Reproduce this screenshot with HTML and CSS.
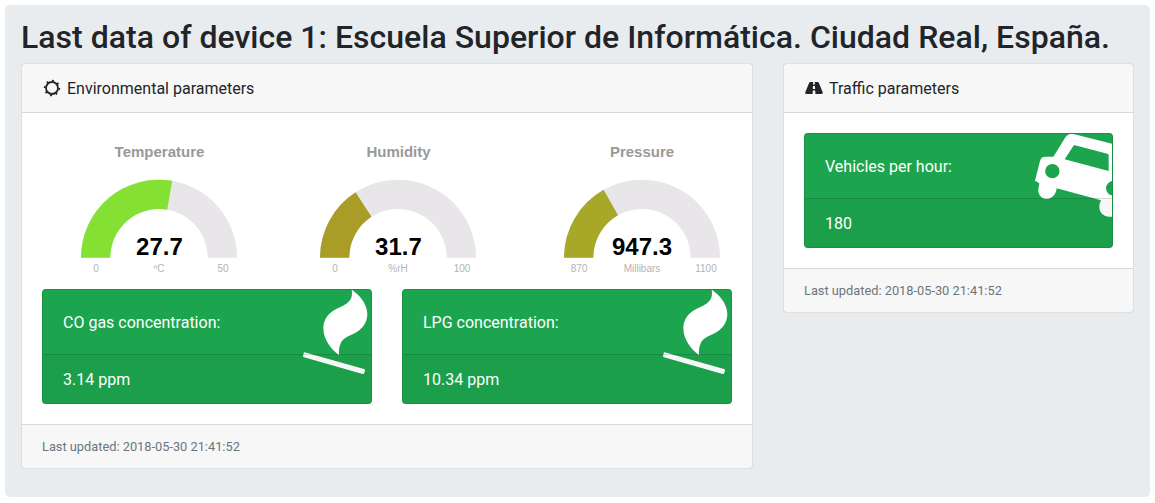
FILE: index.html
```html
<!DOCTYPE html>
<html lang="en">
<head>
<meta charset="utf-8">
<title>Last data of device 1</title>
<link rel="stylesheet" href="styles.css">
</head>
<body>
<main class="panel">
  <h2 class="title">Last data of device 1: Escuela Superior de Informática. Ciudad Real, España.</h2>
  <div class="columns">
    <section class="card">
      <header class="card-header">
        <svg class="head-icon" viewBox="0 0 20 20" aria-hidden="true">
          <circle class="sun-ring" cx="10" cy="10" r="6"/>
          <circle class="sun-teeth" cx="10" cy="10" r="7.4" pathLength="48"/>
        </svg>
        <span>Environmental parameters</span>
      </header>
      <div class="card-body">
        <div class="gauges">
          <svg class="gauge" viewBox="0 0 180 146">
            <text class="g-title" x="90.5" y="24">Temperature</text>
            <path class="g-bg" d="M12 124.7A78 78 0 0 1 168 124.7L138.7 124.7A48.7 48.7 0 0 0 41.3 124.7Z"/>
            <path class="g-temp" d="M12 124.7A78 78 0 0 1 103.17 47.81L98.22 76.7A48.7 48.7 0 0 0 41.3 124.7Z"/>
            <text class="g-value" x="90.4" y="122">27.7</text>
            <text class="g-label" x="27" y="139">0</text>
            <text class="g-label" x="90" y="139">ºC</text>
            <text class="g-label" x="154" y="139">50</text>
          </svg>
          <svg class="gauge" viewBox="0 0 180 146">
            <text class="g-title" x="90.5" y="24">Humidity</text>
            <path class="g-bg" d="M12 124.7A78 78 0 0 1 168 124.7L138.7 124.7A48.7 48.7 0 0 0 41.3 124.7Z"/>
            <path class="g-hum" d="M12 124.7A78 78 0 0 1 47.58 59.25L63.51 83.84A48.7 48.7 0 0 0 41.3 124.7Z"/>
            <text class="g-value" x="90.4" y="122">31.7</text>
            <text class="g-label" x="27" y="139">0</text>
            <text class="g-label" x="90" y="139">%rH</text>
            <text class="g-label" x="154" y="139">100</text>
          </svg>
          <svg class="gauge" viewBox="0 0 180 146">
            <text class="g-title" x="90" y="24">Pressure</text>
            <path class="g-bg" d="M12 124.7A78 78 0 0 1 168 124.7L138.7 124.7A48.7 48.7 0 0 0 41.3 124.7Z"/>
            <path class="g-pres" d="M12 124.7A78 78 0 0 1 51.6 56.81L66.02 82.31A48.7 48.7 0 0 0 41.3 124.7Z"/>
            <text class="g-value" x="90" y="122">947.3</text>
            <text class="g-label" x="27" y="139">870</text>
            <text class="g-label" x="90" y="139">Millibars</text>
            <text class="g-label" x="154" y="139">1100</text>
          </svg>
        </div>
        <div class="boxes">
          <article class="stat">
            <svg class="stat-icon flame" viewBox="0 0 360 390" aria-hidden="true">
              <path class="ic-white" d="M185 29C205 42 232 70 232 102C232 130 215 150 190 162C165 172 145 180 147 226C125 208 100 180 100 145C100 115 118 98 140 86C165 76 192 65 185 29Z"/>
              <polygon class="ic-match" points="45,221 221,271 219,278 43,228"/>
            </svg>
            <div class="stat-top">CO gas concentration:</div>
            <div class="stat-bottom">3.14 ppm</div>
          </article>
          <article class="stat">
            <svg class="stat-icon flame" viewBox="0 0 360 390" aria-hidden="true">
              <path class="ic-white" d="M185 29C205 42 232 70 232 102C232 130 215 150 190 162C165 172 145 180 147 226C125 208 100 180 100 145C100 115 118 98 140 86C165 76 192 65 185 29Z"/>
              <polygon class="ic-match" points="45,221 221,271 219,278 43,228"/>
            </svg>
            <div class="stat-top">LPG concentration:</div>
            <div class="stat-bottom">10.34 ppm</div>
          </article>
        </div>
      </div>
      <footer class="card-footer">Last updated: 2018-05-30 21:41:52</footer>
    </section>
    <section class="card">
      <header class="card-header">
        <svg class="head-icon" viewBox="0 0 20 20" aria-hidden="true">
          <path class="road" d="M6.2 4H9.2L9 6.4H10.9L10.8 4H13.8C14.3 4 14.6 4.2 14.8 4.7L18.7 14.3C19 15.2 18.5 16 17.6 16H11.4L11.2 12.6H8.8L8.6 16H2.4C1.5 16 1 15.2 1.3 14.3L5.2 4.7C5.4 4.2 5.7 4 6.2 4ZM8.9 8L8.9 11H11.1L11 8Z"/>
        </svg>
        <span>Traffic parameters</span>
      </header>
      <div class="card-body">
        <article class="stat">
          <svg class="stat-icon car" viewBox="0 0 360 390" aria-hidden="true">
            <path class="ic-white" fill-rule="evenodd" d="M133 42C138 31 148 25 160 27L290 60V275H265C250 274 238 262 238 246C238 238 240 232 243 226L110 190C108 208 97 222 80 222C64 222 54 209 55 194L58 175L45 167L60 108C62 99 68 95 76 95H100ZM162 60L134 103L266 138V92C266 89 265 87 262 86ZM97 117A21 21 0 1 0 97 160A21 21 0 1 0 97 117ZM280 168A22 22 0 1 0 280 212A22 22 0 1 0 280 168Z"/>
          </svg>
          <div class="stat-top">Vehicles per hour:</div>
          <div class="stat-bottom">180</div>
        </article>
      </div>
      <footer class="card-footer">Last updated: 2018-05-30 21:41:52</footer>
    </section>
  </div>
</main>
</body>
</html>
```
FILE: styles.css
```css
* { box-sizing: border-box; }
body {
  margin: 0;
  padding: 5px 5px 6px;
  background: #fff;
  color: #212529;
  font-family: Roboto, "Liberation Sans", sans-serif;
  font-size: 16px;
  line-height: 1.5;
}
.panel {
  background: #e9ecef;
  border-radius: 4.8px;
  padding: 13px 16px 12px;
}
.title {
  margin: 0 0 6.6px;
  font-size: 32px;
  font-weight: 500;
  line-height: 1.2;
  letter-spacing: .02px;
}
.columns {
  display: grid;
  grid-template-columns: 732px 351px;
  column-gap: 30px;
  align-items: start;
  margin-bottom: 16px;
}
.card {
  background: #fff;
  border: 1px solid rgba(0, 0, 0, .125);
  border-radius: 4px;
}
.card-header {
  display: flex;
  align-items: center;
  gap: 5px;
  padding: 13px 20px 11px;
  background: rgba(0, 0, 0, .03);
  border-bottom: 1px solid rgba(0, 0, 0, .125);
}
.head-icon {
  width: 20px;
  height: 20px;
  flex: none;
  margin-top: -2px;
}
.sun-ring {
  fill: none;
  stroke: #212529;
  stroke-width: 1.8;
}
.sun-teeth {
  fill: none;
  stroke: #212529;
  stroke-width: 1.6;
  stroke-dasharray: 2 4;
}
.road { fill: #212529; }
.card-body { padding: 20px; }
.card-footer {
  padding: 12px 20px;
  background: rgba(0, 0, 0, .03);
  border-top: 1px solid rgba(0, 0, 0, .125);
  color: #6c757d;
  font-size: 12.8px;
}
.gauges {
  display: grid;
  grid-template-columns: 239px 244px 180px;
  padding-left: 27px;
  margin-bottom: 10px;
}
.gauge {
  display: block;
  width: 180px;
  height: 146px;
  overflow: visible;
}
.g-title, .g-value, .g-label {
  font-family: "Liberation Sans", Arial, sans-serif;
  text-anchor: middle;
}
.g-title { font-size: 15px; font-weight: 700; fill: #999; }
.g-value { font-size: 24px; font-weight: 700; fill: #010101; }
.g-label { font-size: 10px; fill: #b3b3b3; }
.g-bg { fill: #e8e6e8; }
.g-temp { fill: #85e034; }
.g-hum { fill: #a99c27; }
.g-pres { fill: #a7a728; }
.boxes {
  display: grid;
  grid-template-columns: 330px 330px;
  column-gap: 30px;
}
.stat {
  position: relative;
  overflow: hidden;
  background: #1ca54e;
  border: 1px solid rgba(0, 0, 0, .125);
  border-radius: 4px;
  color: #fff;
}
.stat-top { padding: 21px 20px 19px; }
.stat-bottom {
  position: relative;
  padding: 13px 20px 11px;
  background: rgba(0, 0, 0, .03);
  border-top: 1px solid rgba(0, 0, 0, .125);
}
.stat-icon {
  position: absolute;
  width: 120px;
  height: 130px;
}
.flame {
  top: -10px;
  right: -39px;
}
.car {
  top: -9px;
  right: -28px;
}
.ic-white { fill: #fff; }
.ic-match {
  fill: #fff;
  stroke: #fff;
  stroke-width: 8;
  stroke-linejoin: round;
}
```
